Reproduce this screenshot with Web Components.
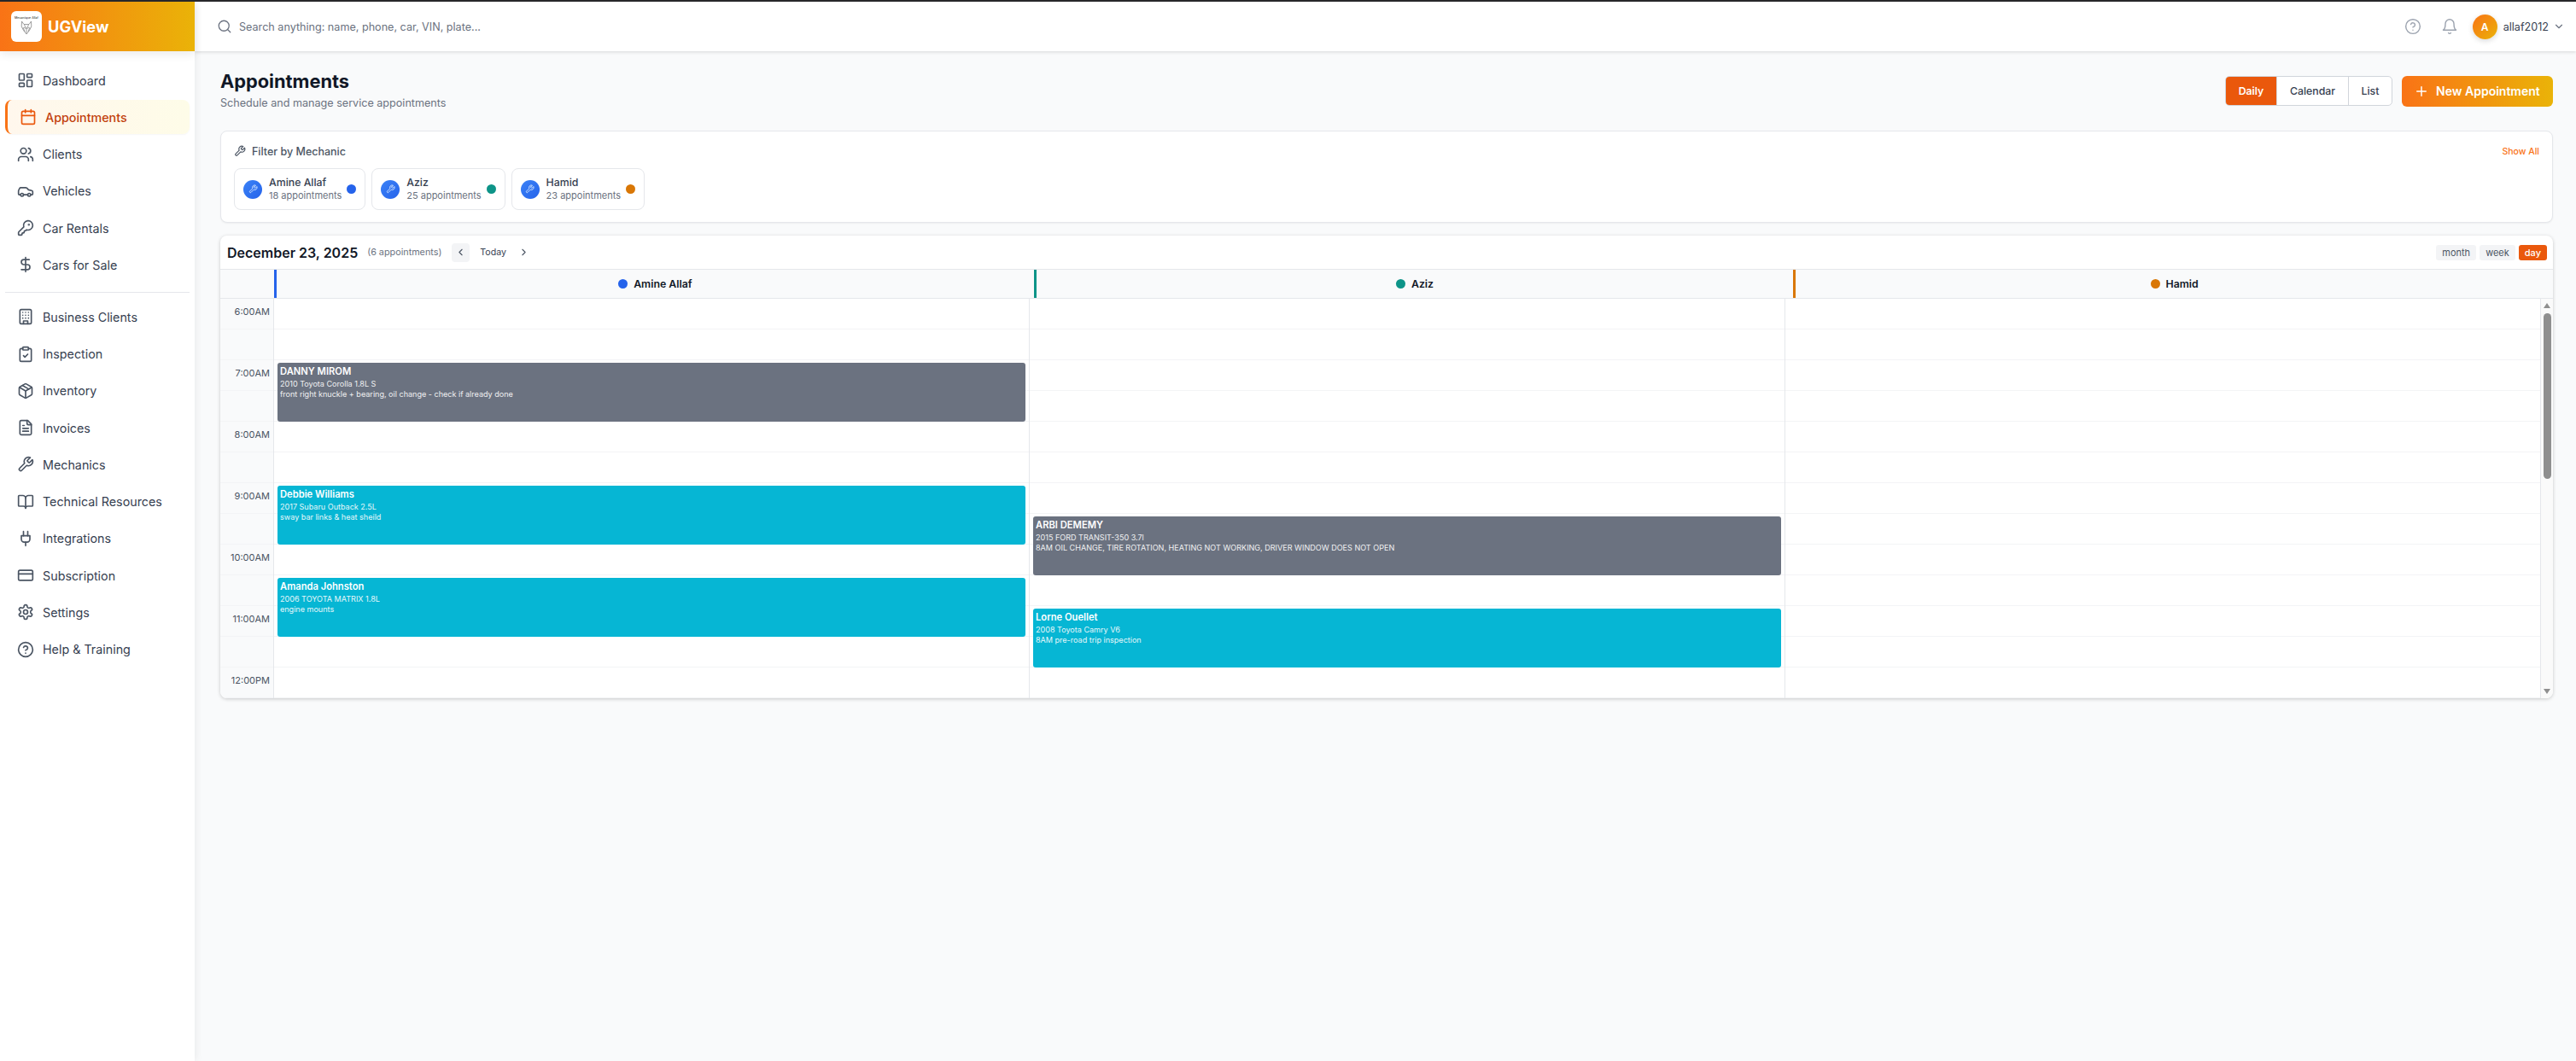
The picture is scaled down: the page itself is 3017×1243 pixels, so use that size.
<!DOCTYPE html>
<html lang="en">
<head>
<meta charset="utf-8">
<title>UGView - Appointments</title>
<style>
  html, body { margin: 0; height: 100%; }
  body { font-family: Inter, "Noto Sans", sans-serif; background: #f9fafb; overflow: hidden; }
</style>
</head>
<body>
<ug-app></ug-app>
<script>
/* lucide icon bodies, keyed by name */
const ICONS = {
  dashboard: '<rect x="3" y="3" width="7" height="9" rx="1"/><rect x="14" y="3" width="7" height="5" rx="1"/><rect x="14" y="12" width="7" height="9" rx="1"/><rect x="3" y="16" width="7" height="5" rx="1"/>',
  calendar: '<path d="M8 2v4"/><path d="M16 2v4"/><rect x="3" y="4" width="18" height="18" rx="2"/><path d="M3 10h18"/>',
  users: '<path d="M16 21v-2a4 4 0 0 0-4-4H6a4 4 0 0 0-4 4v2"/><circle cx="9" cy="7" r="4"/><path d="M22 21v-2a4 4 0 0 0-3-3.87"/><path d="M16 3.13a4 4 0 0 1 0 7.75"/>',
  car: '<path d="M19 17h2c.6 0 1-.4 1-1v-3c0-.9-.7-1.7-1.5-1.9C18.7 10.6 16 10 16 10s-1.3-1.4-2.2-2.3c-.5-.4-1.1-.7-1.8-.7H5c-.6 0-1.1.4-1.4.9l-1.4 2.9A3.7 3.7 0 0 0 2 12v4c0 .6.4 1 1 1h2"/><circle cx="7" cy="17" r="2"/><path d="M9 17h6"/><circle cx="17" cy="17" r="2"/>',
  key: '<path d="M2.586 17.414A2 2 0 0 0 2 18.828V21a1 1 0 0 0 1 1h3a1 1 0 0 0 1-1v-1a1 1 0 0 1 1-1h1a1 1 0 0 0 1-1v-1a1 1 0 0 1 1-1h.172a2 2 0 0 0 1.414-.586l.814-.814a6.5 6.5 0 1 0-4-4z"/><circle cx="16.5" cy="7.5" r=".5" fill="currentColor"/>',
  dollar: '<line x1="12" x2="12" y1="2" y2="22"/><path d="M17 5H9.5a3.5 3.5 0 0 0 0 7h5a3.5 3.5 0 0 1 0 7H6"/>',
  building: '<rect x="4" y="2" width="16" height="20" rx="2"/><path d="M9 22v-4h6v4"/><path d="M8 6h.01"/><path d="M16 6h.01"/><path d="M12 6h.01"/><path d="M12 10h.01"/><path d="M12 14h.01"/><path d="M16 10h.01"/><path d="M16 14h.01"/><path d="M8 10h.01"/><path d="M8 14h.01"/>',
  clipboard: '<rect x="8" y="2" width="8" height="4" rx="1"/><path d="M16 4h2a2 2 0 0 1 2 2v14a2 2 0 0 1-2 2H6a2 2 0 0 1-2-2V6a2 2 0 0 1 2-2h2"/><path d="m9 14 2 2 4-4"/>',
  package: '<path d="M11 21.73a2 2 0 0 0 2 0l7-4A2 2 0 0 0 21 16V8a2 2 0 0 0-1-1.73l-7-4a2 2 0 0 0-2 0l-7 4A2 2 0 0 0 3 8v8a2 2 0 0 0 1 1.73z"/><path d="M12 22V12"/><polyline points="3.29 7 12 12 20.71 7"/><path d="m7.5 4.27 9 5.15"/>',
  file: '<path d="M15 2H6a2 2 0 0 0-2 2v16a2 2 0 0 0 2 2h12a2 2 0 0 0 2-2V7Z"/><path d="M14 2v4a2 2 0 0 0 2 2h4"/><path d="M10 9H8"/><path d="M16 13H8"/><path d="M16 17H8"/>',
  wrench: '<path d="M14.7 6.3a1 1 0 0 0 0 1.4l1.6 1.6a1 1 0 0 0 1.4 0l3.77-3.77a6 6 0 0 1-7.94 7.94l-6.91 6.91a2.12 2.12 0 0 1-3-3l6.91-6.91a6 6 0 0 1 7.94-7.94l-3.76 3.76z"/>',
  book: '<path d="M12 7v14"/><path d="M3 18a1 1 0 0 1-1-1V4a1 1 0 0 1 1-1h5a4 4 0 0 1 4 4 4 4 0 0 1 4-4h5a1 1 0 0 1 1 1v13a1 1 0 0 1-1 1h-6a3 3 0 0 0-3 3 3 3 0 0 0-3-3z"/>',
  plug: '<path d="M12 22v-5"/><path d="M9 8V2"/><path d="M15 8V2"/><path d="M18 8v5a4 4 0 0 1-4 4h-4a4 4 0 0 1-4-4V8Z"/>',
  card: '<rect width="20" height="14" x="2" y="5" rx="2"/><line x1="2" x2="22" y1="10" y2="10"/>',
  settings: '<path d="M12.22 2h-.44a2 2 0 0 0-2 2v.18a2 2 0 0 1-1 1.73l-.43.25a2 2 0 0 1-2 0l-.15-.08a2 2 0 0 0-2.73.73l-.22.38a2 2 0 0 0 .73 2.73l.15.1a2 2 0 0 1 1 1.72v.51a2 2 0 0 1-1 1.74l-.15.09a2 2 0 0 0-.73 2.73l.22.38a2 2 0 0 0 2.73.73l.15-.08a2 2 0 0 1 2 0l.43.25a2 2 0 0 1 1 1.73V20a2 2 0 0 0 2 2h.44a2 2 0 0 0 2-2v-.18a2 2 0 0 1 1-1.73l.43-.25a2 2 0 0 1 2 0l.15.08a2 2 0 0 0 2.73-.73l.22-.39a2 2 0 0 0-.73-2.73l-.15-.08a2 2 0 0 1-1-1.74v-.5a2 2 0 0 1 1-1.74l.15-.09a2 2 0 0 0 .73-2.73l-.22-.38a2 2 0 0 0-2.73-.73l-.15.08a2 2 0 0 1-2 0l-.43-.25a2 2 0 0 1-1-1.73V4a2 2 0 0 0-2-2z"/><circle cx="12" cy="12" r="3"/>',
  help: '<circle cx="12" cy="12" r="10"/><path d="M9.09 9a3 3 0 0 1 5.83 1c0 2-3 3-3 3"/><path d="M12 17h.01"/>',
  bell: '<path d="M6 8a6 6 0 0 1 12 0c0 7 3 9 3 9H3s3-2 3-9"/><path d="M10.3 21a1.94 1.94 0 0 0 3.4 0"/>',
  search: '<circle cx="11" cy="11" r="8"/><path d="m21 21-4.3-4.3"/>',
  down: '<path d="m6 9 6 6 6-6"/>',
  left: '<path d="m15 18-6-6 6-6"/>',
  right: '<path d="m9 18 6-6-6-6"/>',
  plus: '<path d="M5 12h14"/><path d="M12 5v14"/>'
};

class UgIcon extends HTMLElement {
  connectedCallback() {
    const size = this.getAttribute('size') || 20;
    const stroke = this.getAttribute('stroke') || 2;
    this.attachShadow({ mode: 'open' }).innerHTML = `
      <style>
        :host { display: inline-flex; flex: none; width: ${size}px; height: ${size}px; }
        svg { display: block; width: 100%; height: 100%; }
      </style>
      <svg viewBox="0 0 24 24" fill="none" stroke="currentColor" stroke-width="${stroke}"
           stroke-linecap="round" stroke-linejoin="round">${ICONS[this.getAttribute('name')] || ''}</svg>`;
  }
}
customElements.define('ug-icon', UgIcon);

class UgNavItem extends HTMLElement {
  connectedCallback() {
    this.attachShadow({ mode: 'open' }).innerHTML = `
      <style>
        :host { display: flex; align-items: center; gap: 10px; height: 40px; box-sizing: border-box;
          padding: 0 14px; border-radius: 8px; font-size: 14.3px; color: #374151; }
        :host([active]) { color: #c2410c; font-weight: 500; border-left: 3px solid #f97316;
          background: linear-gradient(90deg, #fff7ed, #fefce8); box-shadow: 0 1px 2px rgba(0,0,0,.04); }
        ug-icon { color: #4b5563; }
        :host([active]) ug-icon { color: #ea580c; }
      </style>
      <ug-icon name="${this.getAttribute('icon')}"></ug-icon><slot></slot>`;
  }
}
customElements.define('ug-nav-item', UgNavItem);

class UgSidebar extends HTMLElement {
  connectedCallback() {
    const top = [['dashboard', 'Dashboard'], ['calendar', 'Appointments', 1], ['users', 'Clients'], ['car', 'Vehicles'], ['key', 'Car Rentals'], ['dollar', 'Cars for Sale']];
    const rest = [['building', 'Business Clients'], ['clipboard', 'Inspection'], ['package', 'Inventory'], ['file', 'Invoices'], ['wrench', 'Mechanics'], ['book', 'Technical Resources'], ['plug', 'Integrations'], ['card', 'Subscription'], ['settings', 'Settings'], ['help', 'Help & Training']];
    const items = list => list.map(([i, t, a]) => `<ug-nav-item icon="${i}"${a ? ' active' : ''}>${t.replace('&', '&amp;')}</ug-nav-item>`).join('');
    this.attachShadow({ mode: 'open' }).innerHTML = `
      <style>
        :host { display: flex; flex-direction: column; width: 228px; flex: none; background: #fff;
          box-shadow: 2px 0 8px rgba(0,0,0,.06); position: relative; z-index: 3; }
        .brand { display: flex; align-items: center; gap: 7px; height: 58px; box-sizing: border-box; padding: 0 13px;
          background: linear-gradient(90deg, #f97316, #eab308); box-shadow: 0 4px 10px rgba(0,0,0,.08); }
        .logo { width: 36px; height: 36px; border-radius: 6px; background: #fff; display: flex; flex-direction: column;
          align-items: center; padding-top: 6px; box-sizing: border-box; overflow: hidden; }
        .logo span { font: 500 3.6px/5px Inter, sans-serif; color: #444; white-space: nowrap; }
        .logo svg { width: 14px; height: 17px; display: block; }
        .name { color: #fff; font-size: 18.3px; font-weight: 700; }
        nav { display: flex; flex-direction: column; gap: 3.25px; padding: 14px 6px 0; }
        hr { border: 0; height: 1px; background: #e5e7eb; margin: 8px 0 5.5px; width: 100%; }
      </style>
      <div class="brand">
        <div class="logo">
          <span>Mecanique Allaf</span>
          <svg viewBox="0 0 14 17" fill="none" stroke="#777" stroke-width=".7">
            <path d="M1.5 1l2.5 3.5h6L12.5 1l.3 6-2.3 4.5L7 16l-3.5-4.5L1.2 7z"/>
            <path d="M4 8l2 1.3M10 8L8 9.3M7 10v5M4.5 5L7 10l2.500-5M3 8l2 5M11 8l-2 5"/>
          </svg>
        </div>
        <div class="name">UGView</div>
      </div>
      <nav>
        ${items(top)}
        <hr>
        ${items(rest)}
      </nav>`;
  }
}
customElements.define('ug-sidebar', UgSidebar);

class UgTopbar extends HTMLElement {
  connectedCallback() {
    this.attachShadow({ mode: 'open' }).innerHTML = `
      <style>
        :host { display: flex; align-items: center; height: 58px; flex: none; box-sizing: border-box; padding: 0 13px 0 26px;
          background: #fff; box-shadow: 0 1px 4px rgba(0,0,0,.14); position: relative; z-index: 2; }
        .search { display: flex; align-items: center; gap: 8px; flex: 1; font-size: 12.6px; color: #6b7280; }
        .search ug-icon { color: #6b7280; }
        .help { color: #9ca3af; margin-right: 23px; }
        .bell { color: #9ca3af; margin-right: 17px; }
        .avatar { width: 29px; height: 29px; border-radius: 50%; background: linear-gradient(135deg, #f97316, #eab308);
          color: #fff; font-size: 12px; font-weight: 600; display: grid; place-items: center; box-shadow: 0 2px 6px rgba(0,0,0,.15); }
        .user { font-size: 12.6px; color: #374151; margin: 0 5px 0 7px; }
        .chev { color: #6b7280; }
      </style>
      <div class="search"><ug-icon name="search" size="18" stroke="1.7"></ug-icon><span>Search anything: name, phone, car, VIN, plate...</span></div>
      <ug-icon class="help" name="help" stroke="1.7"></ug-icon>
      <ug-icon class="bell" name="bell" stroke="1.7"></ug-icon>
      <div class="avatar">A</div>
      <span class="user">allaf2012</span>
      <ug-icon class="chev" name="down" size="14"></ug-icon>`;
  }
}
customElements.define('ug-topbar', UgTopbar);

class UgPageHeader extends HTMLElement {
  connectedCallback() {
    this.attachShadow({ mode: 'open' }).innerHTML = `
      <style>
        :host { display: flex; align-items: center; justify-content: space-between; height: 93px; }
        h1 { margin: 0; font-size: 21.8px; line-height: 28px; font-weight: 700; color: #111827; }
        p { margin: 3px 0 0; font-size: 12.6px; line-height: 18px; color: #6b7280; }
        .titles { margin-top: -3px; }
        .actions { display: flex; align-items: center; gap: 11px; }
        .group { display: flex; height: 35px; box-sizing: border-box; border: 1px solid #d1d5db; border-radius: 5px; overflow: hidden; background: #fff; }
        .group span { display: flex; align-items: center; justify-content: center; font-size: 12.3px; font-weight: 500; color: #374151; }
        .group span + span { border-left: 1px solid #d1d5db; }
        .group .on { width: 59px; background: #ea580c; color: #fff; font-weight: 600; }
        .group .cal { width: 83px; }
        .group .lst { width: 50px; }
        .new { display: flex; align-items: center; gap: 8px; width: 177px; height: 36px; box-sizing: border-box; padding-left: 14px;
          border-radius: 6px; background: linear-gradient(90deg, #f97316, #eab308); color: #fff; font-size: 14px; font-weight: 600; }
      </style>
      <div class="titles"><h1>Appointments</h1><p>Schedule and manage service appointments</p></div>
      <div class="actions">
        <div class="group"><span class="on">Daily</span><span class="cal">Calendar</span><span class="lst">List</span></div>
        <div class="new"><ug-icon name="plus" size="18"></ug-icon><span>New Appointment</span></div>
      </div>`;
  }
}
customElements.define('ug-page-header', UgPageHeader);

class UgMechanicChip extends HTMLElement {
  connectedCallback() {
    const a = n => this.getAttribute(n);
    this.attachShadow({ mode: 'open' }).innerHTML = `
      <style>
        :host { display: flex; align-items: center; height: 49px; box-sizing: border-box; padding: 0 10px 0 10px;
          border: 1px solid #e5e7eb; border-radius: 8px; background: #fff; }
        .ico { width: 22px; height: 22px; border-radius: 50%; display: grid; place-items: center; color: #dbeafe;
          background: linear-gradient(135deg, #3b82f6, #2563eb); margin-right: 8px; flex: none; }
        .name { font-size: 12.3px; line-height: 16px; font-weight: 500; color: #374151; }
        .count { font-size: 11px; line-height: 15px; color: #6b7280; white-space: nowrap; }
        .dot { width: 11px; height: 11px; border-radius: 50%; background: ${a('color')}; margin-left: 6px; flex: none; }
      </style>
      <div class="ico"><ug-icon name="wrench" size="11"></ug-icon></div>
      <div><div class="name">${a('name')}</div><div class="count">${a('count')} appointments</div></div>
      <div class="dot"></div>`;
  }
}
customElements.define('ug-mechanic-chip', UgMechanicChip);

class UgMechanicFilter extends HTMLElement {
  connectedCallback() {
    this.attachShadow({ mode: 'open' }).innerHTML = `
      <style>
        :host { display: block; height: 108px; box-sizing: border-box; padding: 14px 15px 0; background: #fff;
          border: 1px solid #e5e7eb; border-radius: 8px; box-shadow: 0 1px 2px rgba(0,0,0,.05); }
        .head { display: flex; align-items: center; justify-content: space-between; height: 18px; margin-bottom: 11px; }
        .title { display: flex; align-items: center; gap: 7px; font-size: 12.5px; font-weight: 500; color: #4b5563; }
        .title ug-icon { color: #4b5563; }
        .all { font-size: 10.5px; font-weight: 500; color: #f97316; }
        .chips { display: flex; gap: 7px; }
      </style>
      <div class="head">
        <div class="title"><ug-icon name="wrench" size="14"></ug-icon>Filter by Mechanic</div>
        <span class="all">Show All</span>
      </div>
      <div class="chips"><slot></slot></div>`;
  }
}
customElements.define('ug-mechanic-filter', UgMechanicFilter);

class UgEvent extends HTMLElement {
  connectedCallback() {
    const a = n => this.getAttribute(n);
    this.attachShadow({ mode: 'open' }).innerHTML = `
      <style>
        :host { display: block; grid-column: 1; grid-row: ${+a('row') + 1} / span 2; margin: 3px 4px 0; padding: 3px 3px; box-sizing: border-box;
          border-radius: 3px; color: #fff; background: ${a('tone') === 'gray' ? '#6b7280' : '#06b6d4'}; overflow: hidden; position: relative; z-index: 1; }
        .who { font-size: 11.2px; line-height: 15px; font-weight: 600; }
        .txt { font-size: 9.05px; line-height: 12px; opacity: .9; }
        .who + .txt { margin-top: 1px; }
      </style>
      <div class="who">${a('who')}</div>
      <div class="txt">${a('car')}</div>
      <div class="txt">${a('note')}</div>`;
  }
}
customElements.define('ug-event', UgEvent);

/* one mechanic column: 13 half hour cells, events overlap them in the same grid */
class UgDayColumn extends HTMLElement {
  connectedCallback() {
    let cells = '';
    for (let i = 1; i <= 13; i++) cells += `<div class="cell" style="grid-row:${i}"></div>`;
    this.attachShadow({ mode: 'open' }).innerHTML = `
      <style>
        :host { display: grid; grid-template-columns: minmax(0, 1fr); grid-template-rows: repeat(13, 36px); border-left: 1px solid #e5e7eb; min-width: 0; }
        .cell { grid-column: 1; border-bottom: 1px solid #f3f4f6; }
      </style>
      ${cells}<slot></slot>`;
  }
}
customElements.define('ug-day-column', UgDayColumn);

class UgCalendar extends HTMLElement {
  connectedCallback() {
    const times = ['6:00AM', '', '7:00AM', '', '8:00AM', '', '9:00AM', '', '10:00AM', '', '11:00AM', '', '12:00PM'];
    const heads = [['Amine Allaf', '#2563eb'], ['Aziz', '#0d9488'], ['Hamid', '#d97706']];
    this.attachShadow({ mode: 'open' }).innerHTML = `
      <style>
        :host { display: block; margin-top: 15px; background: #fff; border-radius: 8px; overflow: hidden;
          box-shadow: 0 1px 4px rgba(0,0,0,.2); }
        .bar { display: flex; align-items: center; height: 40px; box-sizing: border-box; padding: 0 7px 0 8px; border-bottom: 1px solid #e5e7eb; }
        .date { font-size: 16px; font-weight: 600; color: #111827; }
        .count { font-size: 10.8px; color: #6b7280; margin: 0 12px 0 11px; }
        .prev { width: 21px; height: 22px; border-radius: 4px; background: #f3f4f6; display: grid; place-items: center; color: #4b5563; }
        .prev ug-icon { margin-left: -1px; }
        .today { font-size: 10.6px; font-weight: 400; color: #374151; margin: 0 14px 0 12px; }
        .next { color: #4b5563; }
        .views { margin-left: auto; display: flex; gap: 4px; }
        .views span { height: 18px; padding: 0 7px; display: flex; align-items: center; border-radius: 3px; background: #f3f4f6; color: #4b5563; font-size: 11px; }
        .views .on { background: #ea580c; color: #fff; font-weight: 500; }
        .head { display: grid; grid-template-columns: 63px repeat(3, 1fr); height: 34px; box-sizing: border-box; background: #f9fafb; border-bottom: 1px solid #e5e7eb; }
        .head div { display: flex; align-items: center; justify-content: center; gap: 7px; font-size: 12.3px; font-weight: 600; color: #111827; border-left: 3px solid var(--c); }
        .head div:first-child { border: 0; }
        .head i { width: 11px; height: 11px; border-radius: 50%; background: var(--c); }
        .body { display: flex; height: 468px; }
        .times { width: 62px; flex: none; background: #f9fafb; display: grid; grid-template-rows: repeat(13, 36px); }
        .times div { box-sizing: border-box; text-align: right; padding: 8px 4px 0 0; font-size: 11px; line-height: 14px; color: #4b5563; border-bottom: 1px solid #f3f4f6; }
        .grid { flex: 1; display: grid; grid-template-columns: repeat(3, minmax(0, 1fr)); min-width: 0; }
        .scroll { width: 15px; flex: none; box-sizing: border-box; border-left: 1px solid #e5e7eb; background: #fafafa; display: flex; flex-direction: column; align-items: center; }
        .up, .dn { width: 0; height: 0; border-left: 4.5px solid transparent; border-right: 4.5px solid transparent; }
        .up { border-bottom: 6px solid #8f8f8f; margin: 5px 0 6px; }
        .thumb { width: 9px; height: 194px; border-radius: 5px; background: #8f8f8f; }
        .dn { border-top: 6px solid #8f8f8f; margin-top: auto; margin-bottom: 5px; }
      </style>
      <div class="bar">
        <span class="date">December 23, 2025</span>
        <span class="count">(6 appointments)</span>
        <div class="prev"><ug-icon name="left" size="13"></ug-icon></div>
        <span class="today">Today</span>
        <ug-icon class="next" name="right" size="13"></ug-icon>
        <div class="views"><span>month</span><span>week</span><span class="on">day</span></div>
      </div>
      <div class="head"><div></div>${heads.map(([n, c]) => `<div style="--c:${c}"><i></i>${n}</div>`).join('')}</div>
      <div class="body">
        <div class="times">${times.map(t => `<div>${t}</div>`).join('')}</div>
        <div class="grid"><slot></slot></div>
        <div class="scroll"><div class="up"></div><div class="thumb"></div><div class="dn"></div></div>
      </div>`;
  }
}
customElements.define('ug-calendar', UgCalendar);

class UgApp extends HTMLElement {
  connectedCallback() {
    this.attachShadow({ mode: 'open' }).innerHTML = `
      <style>
        :host { display: flex; height: 100vh; box-sizing: border-box; border-top: 2px solid #27272a; background: #f9fafb; overflow: hidden; }
        .side { display: flex; flex-direction: column; flex: 1; min-width: 0; }
        main { padding: 0 27px 0 30px; flex: 1; }
      </style>
      <ug-sidebar></ug-sidebar>
      <div class="side">
        <ug-topbar></ug-topbar>
        <main>
          <ug-page-header></ug-page-header>
          <ug-mechanic-filter>
            <ug-mechanic-chip name="Amine Allaf" count="18" color="#2563eb"></ug-mechanic-chip>
            <ug-mechanic-chip name="Aziz" count="25" color="#0d9488"></ug-mechanic-chip>
            <ug-mechanic-chip name="Hamid" count="23" color="#d97706"></ug-mechanic-chip>
          </ug-mechanic-filter>
          <ug-calendar>
            <ug-day-column>
              <ug-event row="2" tone="gray" who="DANNY MIROM" car="2010 Toyota Corolla 1.8L S" note="front right knuckle + bearing, oil change - check if already done"></ug-event>
              <ug-event row="6" who="Debbie Williams" car="2017 Subaru Outback 2.5L" note="sway bar links &amp; heat sheild"></ug-event>
              <ug-event row="9" who="Amanda Johnston" car="2006 TOYOTA MATRIX 1.8L" note="engine mounts"></ug-event>
            </ug-day-column>
            <ug-day-column>
              <ug-event row="7" tone="gray" who="ARBI DEMEMY" car="2015 FORD TRANSIT-350 3.7l" note="8AM OIL CHANGE, TIRE ROTATION, HEATING NOT WORKING, DRIVER WINDOW DOES NOT OPEN"></ug-event>
              <ug-event row="10" who="Lorne Ouellet" car="2008 Toyota Camry V6" note="8AM pre-road trip inspection"></ug-event>
            </ug-day-column>
            <ug-day-column></ug-day-column>
          </ug-calendar>
        </main>
      </div>`;
  }
}
customElements.define('ug-app', UgApp);
</script>
</body>
</html>
